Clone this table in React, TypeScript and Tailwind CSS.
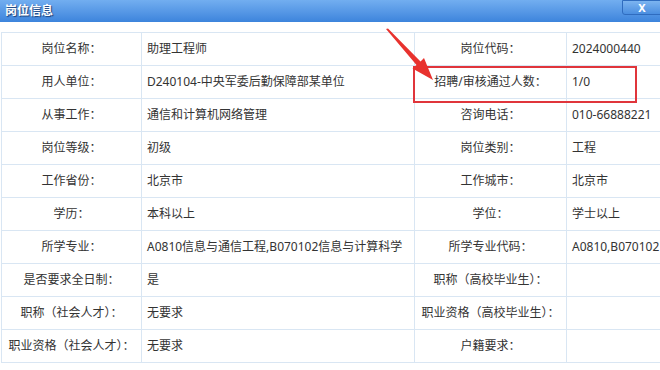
import React from "react";

type Row = [string, string, string, string];

const rows: Row[] = [
  ["岗位名称：", "助理工程师", "岗位代码：", "2024000440"],
  ["用人单位：", "D240104-中央军委后勤保障部某单位", "招聘/审核通过人数：", "1/0"],
  ["从事工作：", "通信和计算机网络管理", "咨询电话：", "010-66888221"],
  ["岗位等级：", "初级", "岗位类别：", "工程"],
  ["工作省份：", "北京市", "工作城市：", "北京市"],
  ["学历：", "本科以上", "学位：", "学士以上"],
  ["所学专业：", "A0810信息与通信工程,B070102信息与计算科学", "所学专业代码：", "A0810,B070102"],
  ["是否要求全日制：", "是", "职称（高校毕业生）：", ""],
  ["职称（社会人才）：", "无要求", "职业资格（高校毕业生）：", ""],
  ["职业资格（社会人才）：", "无要求", "户籍要求：", ""],
];

const font = { fontFamily: '"Noto Sans", "Noto Sans CJK SC", sans-serif' };

export default function App() {
  return (
    <div className="relative w-[660px] h-[370px] overflow-hidden bg-white text-[12px] text-[#333]" style={font}>
      {/* title bar */}
      <div className="relative h-[22px] bg-gradient-to-b from-[#72aef0] to-[#3d84dc] flex items-center pl-[5px]">
        <span className="text-white font-bold text-[12px] [text-shadow:1px_1px_1px_#1a3f78]">岗位信息</span>
        <div className="absolute right-[-2px] top-0 w-[40px] h-[15px] border border-[#2f6cbf] rounded-bl-[3px] bg-gradient-to-b from-[#7cb4f0] to-[#4a8ee0] flex items-center justify-center">
          <span className="text-white text-[11px] font-bold leading-none">X</span>
        </div>
      </div>

      <div className="pt-[10px] pl-[1px]">
        <table className="border-collapse table-fixed w-[760px]">
          <colgroup>
            <col className="w-[140px]" />
            <col className="w-[273px]" />
            <col className="w-[152px]" />
            <col className="w-[195px]" />
          </colgroup>
          <tbody>
            {rows.map((r, i) => (
              <tr key={i} className="h-[33px]">
                <td className="border border-[#d9e6f3] text-center whitespace-nowrap p-0">{r[0]}</td>
                <td className="border border-[#d9e6f3] pl-[5px] whitespace-nowrap">{r[1]}</td>
                <td className="border border-[#d9e6f3] text-center whitespace-nowrap p-0">{r[2]}</td>
                <td className="border border-[#d9e6f3] pl-[5px] whitespace-nowrap">{r[3]}</td>
              </tr>
            ))}
          </tbody>
        </table>
      </div>

      {/* annotation */}
      <div className="absolute left-[413px] top-[66px] w-[224px] h-[37px] border-2 border-[#e0353b]" />
      <svg className="absolute left-0 top-0" width="660" height="370">
        <polygon
          points="386,29 388,28.5 420.5,61.5 424,58 433,80 412.5,68.5 416.5,65"
          fill="#e8322e"
        />
      </svg>
    </div>
  );
}
